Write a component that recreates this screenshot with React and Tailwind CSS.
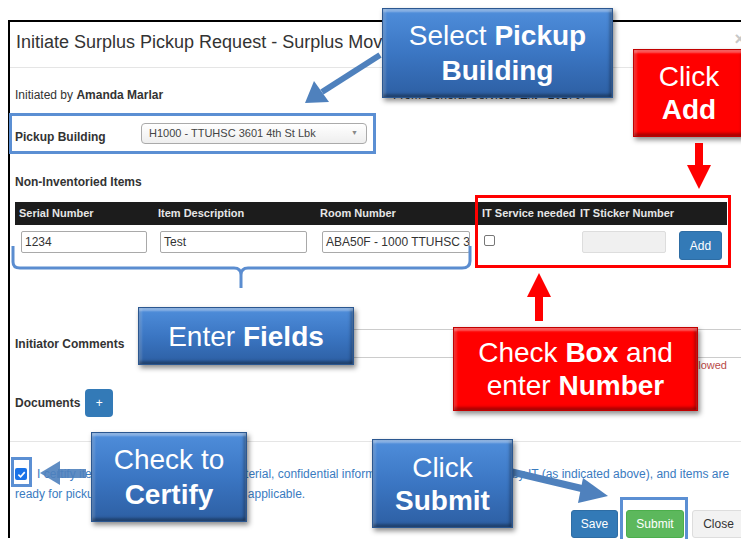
import React from "react";

const font = "font-['Liberation_Sans',Arial,Helvetica,sans-serif]";

// PowerPoint-style bevelled callout box
function Callout({ color = "blue", className = "", children }) {
  const skin =
    color === "blue"
      ? "bg-linear-to-b from-[#4f8edb] via-[#3b76c3] to-[#2d5fa3] border border-[#2b5790]"
      : "bg-[#ff0000] border border-[#c20000]";
  return (
    <div
      className={`absolute flex flex-col items-center justify-center text-white text-[28px] leading-[33px] ${skin} shadow-[inset_0_3px_2px_rgba(255,255,255,0.35),inset_0_-3px_3px_rgba(0,0,0,0.3),inset_3px_0_2px_rgba(255,255,255,0.15),inset_-3px_0_3px_rgba(0,0,0,0.22),2px_3px_5px_rgba(0,0,0,0.45)] ${className}`}
    >
      {children}
    </div>
  );
}

const cols = [
  { label: "Serial Number", w: "w-[140px]", pad: "pl-[4px]" },
  { label: "Item Description", w: "w-[162px]", pad: "pl-[3px]" },
  { label: "Room Number", w: "w-[162px]", pad: "pl-[3px]" },
  { label: "IT Service needed", w: "w-[98px]", pad: "pl-[3px]" },
  { label: "IT Sticker Number", w: "w-[98px]", pad: "pl-[3px]" },
  { label: "", w: "w-[52px]", pad: "" },
];

function TextBox({ value, className = "" }) {
  return (
    <div
      className={`h-[22px] border border-[#a9a9a9] rounded-[2px] bg-white px-[3px] text-[12px] leading-[20px] text-[#333] whitespace-nowrap overflow-hidden ${className}`}
    >
      {value}
    </div>
  );
}

export default function App() {
  return (
    <div className={`relative w-[741px] h-[539px] overflow-hidden bg-white ${font}`}>
      {/* modal */}
      <div className="ml-[8px] mt-[20px] w-[770px] border-l-2 border-t-2 border-black text-[#333]">
        <div className="flex justify-between items-start h-[46px] pl-[6px] pr-[33px] pt-[10px] border-b border-[#e5e5e5]">
          <h1 className="text-[18px] leading-[20px] text-[#333]">
            Initiate Surplus Pickup Request - Surplus Move
          </h1>
          <span className="text-[18px] leading-[14px] font-bold text-[#c8c8c8]">×</span>
        </div>

        <div className="pl-[5px] pt-[19px] pb-[24px] border-b border-[#e5e5e5] text-[12px]">
          <div className="flex leading-[16px]">
            <p className="w-[378px]">
              Initiated by <b>Amanda Marlar</b>
            </p>
            <p>From General Services Ext - 201707</p>
          </div>

          <div className="flex items-start h-[21px] mt-[20px]">
            <label className="w-[126px] pt-[6px] font-bold leading-[16px]">Pickup Building</label>
            <div className="flex items-center justify-between w-[226px] h-[21px] pl-[7px] pr-[8px] border border-[#aaa] rounded-[4px] bg-linear-to-b from-white to-[#eeeeee] text-[11px] text-[#444]">
              <span>H1000 - TTUHSC 3601 4th St Lbk</span>
              <span className="text-[7px] text-[#888]">▼</span>
            </div>
          </div>

          <p className="mt-[30px] font-bold leading-[16px]">Non-Inventoried Items</p>

          <div className="mt-[12px] w-[712px]">
            <div className="flex h-[23px] items-center bg-[#1c1c1c] text-[#e6e6e6] text-[11px] font-bold">
              {cols.map((c, i) => (
                <div key={i} className={`${c.w} ${c.pad} shrink-0 whitespace-nowrap`}>
                  {c.label}
                </div>
              ))}
            </div>
            <div className="flex items-start h-[35px] pt-[6px]">
              <div className="w-[140px] pl-[6px]">
                <TextBox value="1234" className="w-[126px]" />
              </div>
              <div className="w-[162px] pl-[5px]">
                <TextBox value="Test" className="w-[147px]" />
              </div>
              <div className="w-[162px] pl-[5px]">
                <TextBox value="ABA50F - 1000 TTUHSC 3601 4th St Lbk" className="w-[148px]" />
              </div>
              <div className="w-[98px] pl-[5px] pt-[4px]">
                <div className="w-[11px] h-[11px] border border-[#777] rounded-[2px] bg-white" />
              </div>
              <div className="w-[98px] pl-[5px]">
                <div className="w-[84px] h-[22px] border border-[#ddd] rounded-[2px] bg-[#f0f0f0]" />
              </div>
              <div className="w-[52px] pl-[4px]">
                <button className="w-[43px] h-[29px] rounded-[3px] bg-[#337ab7] border border-[#2e6da4] text-white text-[12px]">
                  Add
                </button>
              </div>
            </div>
          </div>

          <div className="flex items-center mt-[69px]">
            <label className="w-[125px] font-bold leading-[16px]">Initiator Comments</label>
            <div className="w-[630px] h-[29px] border border-[#ccc] bg-white" />
          </div>
          <p className="ml-[125px] w-[587px] text-right text-[11px] leading-[14px] text-[#b94a48]">
            Maximum 500 characters allowed
          </p>

          <div className="flex items-center gap-[5px] mt-[17px]">
            <span className="font-bold leading-[16px]">Documents</span>
            <button className="w-[28px] h-[28px] rounded-[4px] bg-[#337ab7] text-white text-[12px]">+</button>
          </div>
        </div>

        <div className="pl-[5px] pr-[33px] pt-[22px] text-[12px]">
          <div className="leading-[20px] text-[#3a7bbf] whitespace-nowrap">
            <div className="flex items-center">
              <span className="w-[12px] h-[12px] rounded-[2px] bg-[#1a73e8] flex items-center justify-center">
                <svg width="9" height="9" viewBox="0 0 10 10">
                  <path d="M1.5 5.2 L4 7.6 L8.6 2.4" stroke="white" strokeWidth="1.8" fill="none" />
                </svg>
              </span>
              <span className="ml-[10px]">
                I certify items are free of hazardous material, confidential information, and were reviewed by IT (as indicated above), and items are
              </span>
            </div>
            <p>ready for pickup. Data has been removed if applicable.</p>
          </div>
          <div className="flex justify-end gap-[8px] mt-[6px]">
            <button className="w-[47px] h-[28px] rounded-[3px] bg-[#337ab7] border border-[#2e6da4] text-white text-[12px]">Save</button>
            <button className="w-[58px] h-[28px] rounded-[3px] bg-[#5cb85c] border border-[#4cae4c] text-white text-[12px]">Submit</button>
            <button className="w-[53px] h-[28px] rounded-[3px] bg-[#f2f2f2] border border-[#ddd] text-[#333] text-[12px]">Close</button>
          </div>
        </div>
      </div>

      {/* highlight frames */}
      <div className="absolute left-[9px] top-[113px] w-[367px] h-[41px] border-[3px] border-[#5b8fd3]" />
      <div className="absolute left-[475px] top-[195px] w-[256px] h-[73px] border-[3px] border-[#ff0000]" />
      <div className="absolute left-[11px] top-[457px] w-[21px] h-[30px] border-[3px] border-[#5b8fd3]" />
      <div className="absolute left-[620px] top-[497px] w-[68px] h-[50px] border-[3px] border-[#5b8fd3]" />

      {/* arrows and bracket */}
      <svg className="absolute inset-0 pointer-events-none" width="741" height="539">
        <path
          d="M13 246 L13 262 Q13 268 20 268 L234 268 Q241 268 241 275 L241 288 M241 275 Q241 268 248 268 L462 268 Q470 268 470 261 L470 246"
          stroke="#5b8dd0"
          strokeWidth="3"
          fill="none"
        />
        <line x1="380" y1="55" x2="322" y2="92" stroke="#4f81bd" strokeWidth="6" />
        <polygon points="305,103 314,81 329,102" fill="#4f81bd" />
        <rect x="535" y="295" width="8" height="26" fill="#ff0000" />
        <polygon points="539,273 527,297 551,297" fill="#ff0000" />
        <rect x="695" y="143" width="8" height="24" fill="#ff0000" />
        <polygon points="699,189 687,165 711,165" fill="#ff0000" />
        <rect x="58" y="469" width="28" height="9" fill="#4f81bd" opacity="0.9" />
        <polygon points="40,473 60,461 60,485" fill="#4f81bd" opacity="0.9" />
        <line x1="512" y1="472" x2="588" y2="490" stroke="#4f81bd" strokeWidth="7" />
        <polygon points="608,496 583,478 578,503" fill="#4f81bd" />
      </svg>

      {/* callouts */}
      <Callout className="left-[382px] top-[8px] w-[231px] h-[90px] leading-[35px]">
        <p>
          Select <b>Pickup</b>
        </p>
        <p className="font-bold">Building</p>
      </Callout>
      <Callout color="red" className="left-[633px] top-[49px] w-[112px] h-[88px] leading-[32px]">
        <p>Click</p>
        <p className="font-bold">Add</p>
      </Callout>
      <Callout className="left-[138px] top-[307px] w-[216px] h-[58px]">
        <p>
          Enter <b>Fields</b>
        </p>
      </Callout>
      <Callout color="red" className="left-[453px] top-[327px] w-[245px] h-[84px] leading-[32px]">
        <p>
          Check <b>Box</b> and
        </p>
        <p>
          enter <b>Number</b>
        </p>
      </Callout>
      <Callout className="left-[91px] top-[432px] w-[156px] h-[90px] leading-[35px]">
        <p>Check to</p>
        <p className="font-bold">Certify</p>
      </Callout>
      <Callout className="left-[372px] top-[439px] w-[141px] h-[89px] leading-[32px]">
        <p>Click</p>
        <p className="font-bold">Submit</p>
      </Callout>
    </div>
  );
}
